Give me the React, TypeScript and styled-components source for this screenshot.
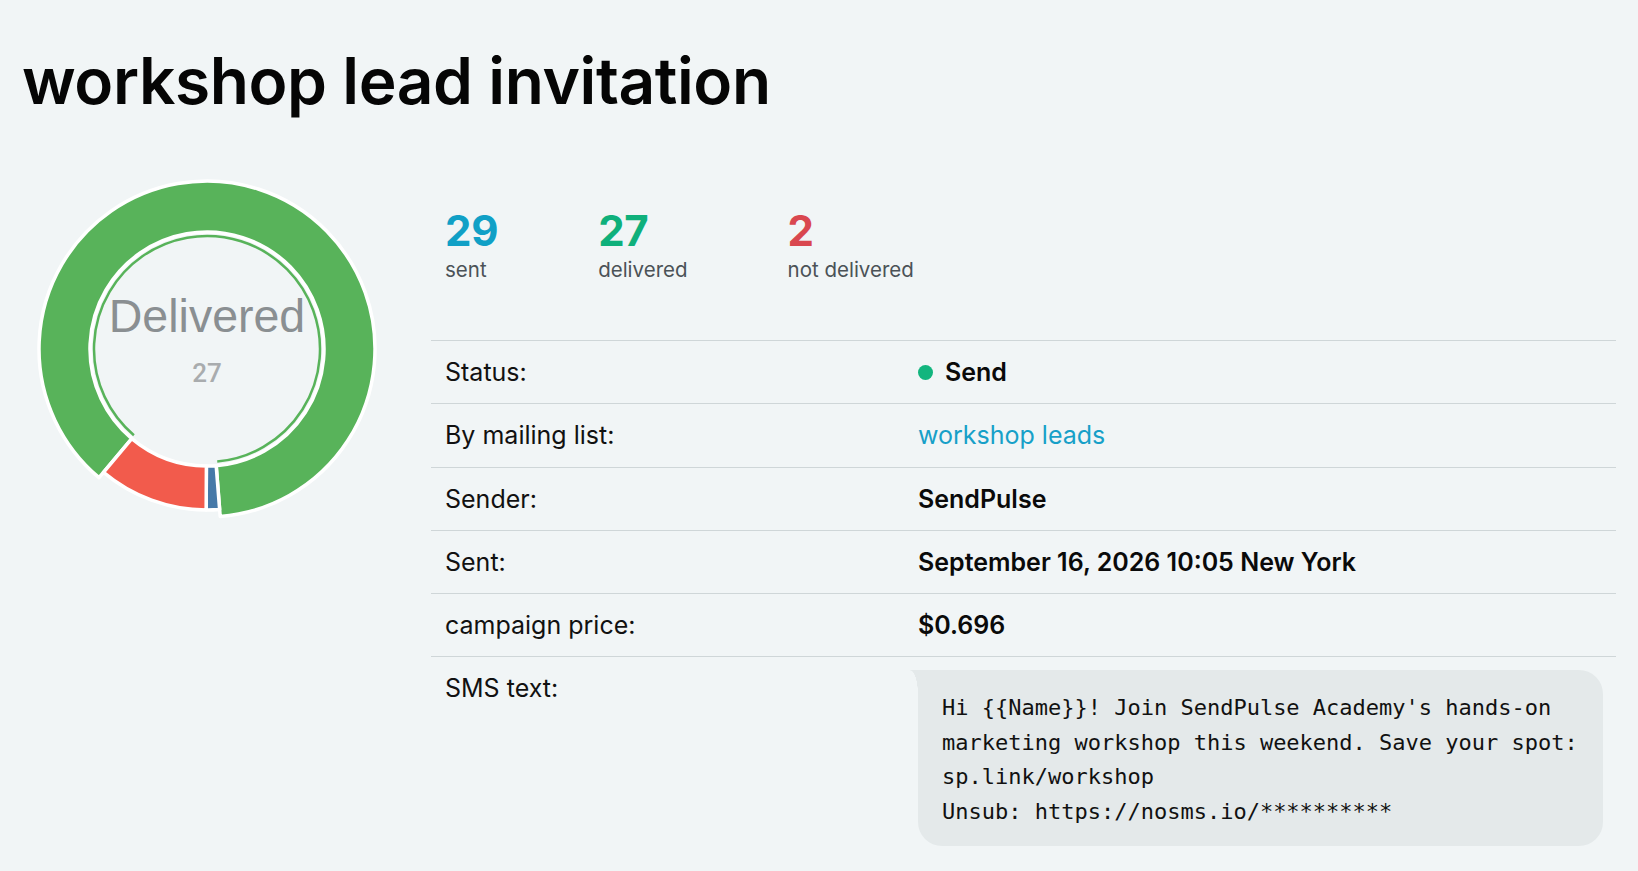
import React from 'react';
import styled, { createGlobalStyle } from 'styled-components';

const GlobalStyle = createGlobalStyle`
  html, body {
    margin: 0;
    padding: 0;
    background: #f1f5f6;
  }
  body {
    font-family: Inter, "Noto Sans", sans-serif;
    color: #111;
  }
`;

const Page = styled.div`
  padding: 43px 22px 0;
  min-height: 871px;
  box-sizing: border-box;
`;

const Title = styled.h1`
  margin: 0;
  font-size: 64px;
  line-height: 1.2;
  font-weight: 600;
  letter-spacing: -0.4px;
  color: #050505;
`;

const Layout = styled.div`
  display: flex;
  margin-top: 44px;
`;

const ChartCol = styled.div`
  width: 409px;
  flex-shrink: 0;
`;

const DetailsCol = styled.div`
  flex: 1;
  padding-top: 42px;
`;

const Stats = styled.div`
  display: flex;
  gap: 100px;
  padding-left: 14px;
  margin-bottom: 57px;
`;

const Stat = styled.div`
  display: flex;
  flex-direction: column;
`;

const StatValue = styled.div<{ $color: string }>`
  font-size: 42px;
  line-height: 1.2;
  font-weight: 650;
  letter-spacing: -0.3px;
  color: ${(p) => p.$color};
`;

const StatLabel = styled.div`
  font-size: 20.5px;
  line-height: 27px;
  color: #4b5257;
`;

const Table = styled.div`
  border-top: 1px solid #cfd6d8;
`;

const Row = styled.div<{ $last?: boolean }>`
  display: flex;
  align-items: ${(p) => (p.$last ? 'flex-start' : 'center')};
  border-bottom: ${(p) => (p.$last ? 'none' : '1px solid #cfd6d8')};
  min-height: 62.2px;
`;

const Label = styled.div`
  width: 487px;
  flex-shrink: 0;
  box-sizing: border-box;
  padding: 13px 14px;
  font-size: 25px;
  line-height: 36px;
  color: #111;
`;

const Value = styled.div<{ $bold?: boolean }>`
  flex: 1;
  padding: 13px 13px 13px 0;
  font-size: 25px;
  line-height: 36px;
  font-weight: ${(p) => (p.$bold ? 600 : 400)};
  color: #0a0a0a;
  display: flex;
  align-items: center;
`;

const StatusDot = styled.span`
  width: 15px;
  height: 15px;
  border-radius: 50%;
  background: #12b57e;
  margin-right: 12px;
`;

const Link = styled.a`
  color: #17a0c8;
  text-decoration: none;
`;

const Bubble = styled.div`
  position: relative;
  flex: 1;
  background: #e4e9ea;
  border-radius: 0 24px 24px 24px;
  padding: 21px 24px 17px;
  font-family: "DejaVu Sans Mono", "Liberation Mono", monospace;
  font-size: 22px;
  line-height: 34.5px;
  color: #111;
  white-space: pre-wrap;
  font-weight: 400;

  &::before {
    content: '';
    position: absolute;
    left: -8px;
    top: 0;
    width: 8px;
    height: 24px;
    background: radial-gradient(ellipse 8px 24px at 0 100%, transparent 97%, #e4e9ea 100%);
  }
`;

const GREEN = '#58b35a';
const RED = '#f25b4c';
const BLUE = '#4679a8';

const C = 185;

function pt(r: number, deg: number) {
  const a = (deg * Math.PI) / 180;
  return [C + r * Math.sin(a), C - r * Math.cos(a)];
}

function slice(ro: number, ri: number, start: number, end: number) {
  const large = end - start > 180 ? 1 : 0;
  const [x1, y1] = pt(ro, start);
  const [x2, y2] = pt(ro, end);
  const [x3, y3] = pt(ri, end);
  const [x4, y4] = pt(ri, start);
  return `M${x1} ${y1} A${ro} ${ro} 0 ${large} 1 ${x2} ${y2} L${x3} ${y3} A${ri} ${ri} 0 ${large} 0 ${x4} ${y4} Z`;
}

function arc(r: number, start: number, end: number) {
  const large = end - start > 180 ? 1 : 0;
  const [x1, y1] = pt(r, start);
  const [x2, y2] = pt(r, end);
  return `M${x1} ${y1} A${r} ${r} 0 ${large} 1 ${x2} ${y2}`;
}

function Donut() {
  return (
    <svg width="370" height="370" viewBox="0 0 370 370">
      <path d={slice(168, 117, 220, 535.5)} fill={GREEN} stroke="#fff" strokeWidth="3.5" strokeLinejoin="round" />
      <path d={slice(161, 117, 175.5, 180.3)} fill={BLUE} stroke="#fff" strokeWidth="3.5" strokeLinejoin="round" />
      <path d={slice(161, 117, 180.3, 220)} fill={RED} stroke="#fff" strokeWidth="3.5" strokeLinejoin="round" />
      <path d={arc(113, 220.3, 534.8)} fill="none" stroke={GREEN} strokeWidth="2.5" />
      <text
        x={C}
        y={168}
        textAnchor="middle"
        fontFamily="'Liberation Sans', Arial, sans-serif"
        fontSize="46.5"
        fill="#8a8f92"
      >
        Delivered
      </text>
      <text
        x={C}
        y={218}
        textAnchor="middle"
        fontFamily="Roboto, 'Liberation Sans', sans-serif"
        fontSize="26"
        fontWeight="500"
        fill="#a9acae"
      >
        27
      </text>
    </svg>
  );
}

const smsText =
  "Hi {{Name}}! Join SendPulse Academy's hands-on marketing workshop this weekend. Save your spot: sp.link/workshop\nUnsub: https://nosms.io/**********";

export default function App() {
  return (
    <>
      <GlobalStyle />
      <Page>
        <Title>workshop lead invitation</Title>
        <Layout>
          <ChartCol>
            <Donut />
          </ChartCol>
          <DetailsCol>
            <Stats>
              <Stat>
                <StatValue $color="#10a0c6">29</StatValue>
                <StatLabel>sent</StatLabel>
              </Stat>
              <Stat>
                <StatValue $color="#0fb07b">27</StatValue>
                <StatLabel>delivered</StatLabel>
              </Stat>
              <Stat>
                <StatValue $color="#d9474f">2</StatValue>
                <StatLabel>not delivered</StatLabel>
              </Stat>
            </Stats>
            <Table>
              <Row>
                <Label>Status:</Label>
                <Value $bold>
                  <StatusDot />
                  Send
                </Value>
              </Row>
              <Row>
                <Label>By mailing list:</Label>
                <Value>
                  <Link href="#">workshop leads</Link>
                </Value>
              </Row>
              <Row>
                <Label>Sender:</Label>
                <Value $bold>SendPulse</Value>
              </Row>
              <Row>
                <Label>Sent:</Label>
                <Value $bold>September 16, 2026 10:05 New York</Value>
              </Row>
              <Row>
                <Label>campaign price:</Label>
                <Value $bold>$0.696</Value>
              </Row>
              <Row $last>
                <Label>SMS text:</Label>
                <Value>
                  <Bubble>{smsText}</Bubble>
                </Value>
              </Row>
            </Table>
          </DetailsCol>
        </Layout>
      </Page>
    </>
  );
}
